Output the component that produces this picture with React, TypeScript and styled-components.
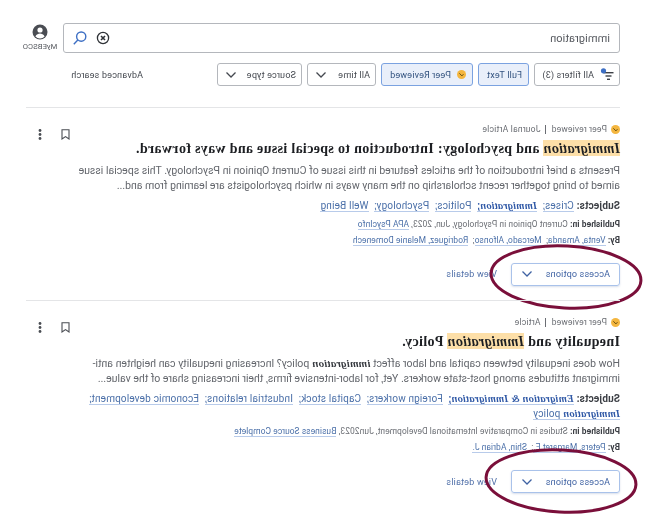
import React from "react";
import styled, { createGlobalStyle } from "styled-components";

const GlobalStyle = createGlobalStyle`
  html, body {
    margin: 0;
    padding: 0;
    background: #ffffff;
    overflow: hidden;
  }
`;

// the whole reference is a horizontal mirror of the page
const Page = styled.div`
  width: 663px;
  height: 528px;
  box-sizing: border-box;
  padding: 23px 20px 0 43px;
  transform: scaleX(-1);
  filter: blur(0.3px);
  font-family: Roboto, "Noto Sans", sans-serif;
  color: #44484f;
  overflow: hidden;
`;

const SearchRow = styled.div`
  display: flex;
  align-items: flex-start;
  gap: 5px;
`;

const SearchBox = styled.div`
  flex: none;
  width: 557px;
  height: 30px;
  box-sizing: border-box;
  border: 1px solid #b4b7bc;
  border-radius: 3px;
  padding: 0 9px;
  display: flex;
  align-items: center;
  justify-content: space-between;
  font-size: 11px;
  color: #55585e;
  letter-spacing: 0.1px;
`;

const SearchIcons = styled.div`
  display: flex;
  align-items: center;
  gap: 9px;
`;

const Account = styled.div`
  flex: none;
  display: flex;
  flex-direction: column;
  align-items: center;
  gap: 2px;
  width: 36px;
  margin-top: 1px;
  font-size: 7.6px;
  line-height: 10px;
  color: #55585e;
  letter-spacing: 0.1px;
`;

const FilterRow = styled.div`
  display: flex;
  align-items: center;
  gap: 5px;
  margin-top: 10px;
`;

const FilterButton = styled.div<{ $width: number; $active?: boolean; $align?: string }>`
  flex: none;
  width: ${({ $width }) => $width}px;
  height: 23px;
  box-sizing: border-box;
  border: 1px solid ${({ $active }) => ($active ? "#7ba2e0" : "#b4b7bc")};
  border-radius: 3px;
  background: ${({ $active }) => ($active ? "#e9effa" : "#ffffff")};
  color: ${({ $active }) => ($active ? "#32527f" : "#44484f")};
  display: flex;
  align-items: center;
  justify-content: ${({ $align }) => $align ?? "space-between"};
  gap: 6px;
  padding: 0 7px 0 5px;
  font-size: 9px;
  letter-spacing: 0.2px;
  white-space: nowrap;
`;

const AdvancedLink = styled.span`
  margin-left: 69px;
  font-size: 9px;
  letter-spacing: 0.2px;
  color: #44484f;
`;

const ResultList = styled.div`
  margin-top: 21px;
`;

const Result = styled.div<{ $height: number }>`
  position: relative;
  height: ${({ $height }) => $height}px;
  box-sizing: border-box;
  padding-top: 16px;
  border-top: 1px solid #e4e5e7;
  width: 594px;
`;

const Meta = styled.div`
  display: flex;
  align-items: center;
  gap: 4px;
  font-size: 8.5px;
  letter-spacing: 0.2px;
  color: #6a6d73;
`;

const MetaDivider = styled.span`
  width: 1px;
  height: 9px;
  background: #6a6d73;
  margin: 0 1px;
`;

const Title = styled.div`
  font-family: "Liberation Serif", serif;
  font-weight: 700;
  font-size: 14px;
  line-height: 16px;
  margin-top: 7px;
  color: #1d1f23;
  letter-spacing: 0.33px;
`;

const Highlight = styled.mark`
  background: #fddfa8;
  color: inherit;
  font-style: italic;
  padding: 1px 0 0;
`;

const Description = styled.div`
  width: 545px;
  margin-top: 6px;
  font-size: 10.5px;
  line-height: 15px;
  color: #63666c;
`;

const Subjects = styled.div`
  width: 545px;
  margin-top: 6px;
  font-size: 10px;
  line-height: 14.5px;
  letter-spacing: 0.17px;
  color: #3b3e44;
`;

const SubjectLink = styled.span<{ $strong?: boolean }>`
  color: ${({ $strong }) => ($strong ? "#2f58a6" : "#4a6fa8")};
  border-bottom: 1px solid #b8cbea;
  font-weight: ${({ $strong }) => ($strong ? 700 : 400)};
  margin-right: 3px;
`;

const Em = styled.b`
  font-family: "Liberation Serif", serif;
  font-size: 1.04em;
  font-style: italic;
  font-weight: 700;
  letter-spacing: 0.25px;
`;

const DescriptionEm = styled(Em)`
  color: #35383e;
`;

const PlainPart = styled.span`
  font-weight: 400;
  color: #4a6fa8;
`;

const Label = styled.b`
  font-weight: 700;
  color: #3b3e44;
`;

const SmallLine = styled.div`
  margin-top: 5px;
  font-size: 8.4px;
  line-height: 11px;
  letter-spacing: 0.09px;
  color: #6a6d73;
`;

const SmallLink = styled.span`
  color: #4a6fa8;
  border-bottom: 1px solid #b8cbea;
`;

const Sep = styled.span`
  margin-right: 4.5px;
`;

const ActionRow = styled.div`
  display: flex;
  align-items: center;
  gap: 14px;
  margin-top: 17px;
`;

const AccessButton = styled.div`
  width: 109px;
  height: 23px;
  box-sizing: border-box;
  border: 1px solid #a9c2ea;
  border-radius: 3px;
  box-shadow: 0 1px 2px rgba(60, 90, 150, 0.2);
  display: flex;
  align-items: center;
  justify-content: space-between;
  padding: 0 9px;
  font-size: 9px;
  letter-spacing: 0.2px;
  color: #3f62a3;
`;

const DetailsLink = styled.span`
  font-size: 9px;
  letter-spacing: 0.2px;
  color: #4f6fa8;
`;

const CardTools = styled.div`
  position: absolute;
  top: 21px;
  right: 12px;
  display: flex;
  align-items: center;
  gap: 19px;
`;

const Annotation = styled.svg<{ $top: number; $left: number }>`
  position: absolute;
  top: ${({ $top }) => $top}px;
  left: ${({ $left }) => $left}px;
  overflow: visible;
`;

const Chevron = () => (
  <svg width="12" height="8" viewBox="0 0 12 8" fill="none" stroke="currentColor" strokeWidth="1.3">
    <path d="M1.5 1.5 6 6l4.5-4.5" />
  </svg>
);

const PeerBadge = ({ size = 9 }: { size?: number }) => (
  <svg width={size} height={size} viewBox="0 0 10 10">
    <circle cx="5" cy="5" r="5" fill="#f4b63f" />
    <path d="M2.8 4.6 4.6 6.6 7.4 3.6" fill="none" stroke="#6b5314" strokeWidth="1.1" />
  </svg>
);

const FiltersIcon = () => (
  <svg width="14" height="14" viewBox="0 0 14 14">
    <rect x="0.5" y="4" width="10" height="1.4" fill="#3d4046" />
    <rect x="2.5" y="7.3" width="6" height="1.4" fill="#3d4046" />
    <rect x="4" y="10.6" width="3" height="1.4" fill="#3d4046" />
    <circle cx="10.5" cy="2.8" r="2.6" fill="#3d6fc4" />
  </svg>
);

const Bookmark = () => (
  <svg width="9" height="11" viewBox="0 0 9 11" fill="none" stroke="#4a4d53" strokeWidth="1.1">
    <path d="M1 .8h7v9.2L4.5 7.6 1 10z" />
  </svg>
);

const Dots = () => (
  <svg width="4" height="11" viewBox="0 0 4 11" fill="#4a4d53">
    <circle cx="2" cy="1.5" r="1.4" />
    <circle cx="2" cy="5.5" r="1.4" />
    <circle cx="2" cy="9.5" r="1.4" />
  </svg>
);

const Ring = ({ top, left }: { top: number; left: number }) => (
  <Annotation $top={top} $left={left} width="156" height="68">
    <ellipse
      cx="78"
      cy="34"
      rx="75"
      ry="31"
      fill="none"
      stroke="#7a0f3a"
      strokeWidth="3"
      transform="rotate(-3 78 34)"
    />
  </Annotation>
);

export default function App() {
  return (
    <>
      <GlobalStyle />
      <Page>
        <SearchRow>
          <SearchBox>
            immigration
            <SearchIcons>
              <svg width="14" height="14" viewBox="0 0 14 14" fill="none" stroke="#2f3237" strokeWidth="1.3">
                <circle cx="7" cy="7" r="5.6" />
                <path d="M5 5l4 4M9 5l-4 4" strokeWidth="1.6" />
              </svg>
              <svg width="14" height="14" viewBox="0 0 14 14" fill="none" stroke="#3d6fc4" strokeWidth="1.4">
                <circle cx="5.8" cy="5.6" r="4.6" />
                <path d="M9.2 9l4 4.2" />
              </svg>
            </SearchIcons>
          </SearchBox>
          <Account>
            <svg width="16" height="16" viewBox="0 0 16 16">
              <circle cx="8" cy="8" r="7.5" fill="#4a4d53" />
              <circle cx="8" cy="6" r="2.6" fill="#ffffff" />
              <path d="M3.4 12.4c1-2 3-2.8 4.6-2.8s3.6.8 4.6 2.8A6.4 6.4 0 0 1 8 14.4a6.4 6.4 0 0 1-4.6-2z" fill="#ffffff" />
            </svg>
            MyEBSCO
          </Account>
        </SearchRow>

        <FilterRow>
          <FilterButton $width={86} $align="flex-start">
            <FiltersIcon />
            <span>All filters (3)</span>
          </FilterButton>
          <FilterButton $width={51} $active $align="center">
            <span>Full Text</span>
          </FilterButton>
          <FilterButton $width={92} $active $align="center">
            <PeerBadge />
            Peer Reviewed
          </FilterButton>
          <FilterButton $width={69}>
            All time
            <Chevron />
          </FilterButton>
          <FilterButton $width={85}>
            Source type
            <Chevron />
          </FilterButton>
          <AdvancedLink>Advanced search</AdvancedLink>
        </FilterRow>

        <ResultList>
          <Result $height={193}>
            <Meta>
              <PeerBadge />
              Peer reviewed
              <MetaDivider />
              Journal Article
            </Meta>
            <Title>
              <Highlight>Immigration</Highlight> and psychology: Introduction to special issue and ways forward.
            </Title>
            <Description>
              Presents a brief introduction of the articles featured in this issue of Current Opinion in Psychology.
              This special issue aimed to bring together recent scholarship on the many ways in which psychologists are
              learning from and...
            </Description>
            <Subjects>
              <Label>Subjects: </Label>
              <SubjectLink>Crises;</SubjectLink>{" "}
              <SubjectLink $strong>
                <Em>Immigration</Em>;
              </SubjectLink>{" "}
              <SubjectLink>Politics;</SubjectLink>{" "}
              <SubjectLink>Psychology;</SubjectLink>{" "}
              <SubjectLink>Well Being</SubjectLink>
            </Subjects>
            <SmallLine>
              <Label>Published in: </Label>
              Current Opinion in Psychology, Jun, 2023, <SmallLink>APA PsycInfo</SmallLink>
            </SmallLine>
            <SmallLine>
              <Label>By: </Label>
              <SmallLink>Venta, Amanda</SmallLink>
              <Sep>;</Sep>
              <SmallLink>Mercado, Alfonso</SmallLink>
              <Sep>;</Sep>
              <SmallLink>Rodriguez, Melanie Domenech</SmallLink>
            </SmallLine>
            <ActionRow>
              <AccessButton>
                Access options
                <Chevron />
              </AccessButton>
              <DetailsLink>View details</DetailsLink>
            </ActionRow>
            <CardTools>
              <Bookmark />
              <Dots />
            </CardTools>
            <Ring top={135} left={-24} />
          </Result>

          <Result $height={228}>
            <Meta>
              <PeerBadge />
              Peer reviewed
              <MetaDivider />
              Article
            </Meta>
            <Title>
              Inequality and <Highlight>Immigration</Highlight> Policy.
            </Title>
            <Description>
              How does inequality between capital and labor affect <DescriptionEm>immigration</DescriptionEm> policy?
              Increasing inequality can heighten anti-immigrant attitudes among host-state workers. Yet, for
              labor-intensive firms, their increasing share of the value...
            </Description>
            <Subjects>
              <Label>Subjects: </Label>
              <SubjectLink $strong>
                <Em>Emigration &amp; Immigration</Em>;
              </SubjectLink>{" "}
              <SubjectLink>Foreign workers;</SubjectLink>{" "}
              <SubjectLink>Capital stock;</SubjectLink>{" "}
              <SubjectLink>Industrial relations;</SubjectLink>{" "}
              <SubjectLink>Economic development;</SubjectLink>{" "}
              <SubjectLink $strong>
                <Em>Immigration</Em>
                <PlainPart> policy</PlainPart>
              </SubjectLink>
            </Subjects>
            <SmallLine>
              <Label>Published in: </Label>
              Studies in Comparative International Development, Jun2023, <SmallLink>Business Source Complete</SmallLink>
            </SmallLine>
            <SmallLine>
              <Label>By: </Label>
              <SmallLink>Peters, Margaret E.</SmallLink>
              <Sep>;</Sep>
              <SmallLink>Shin, Adrian J.</SmallLink>
            </SmallLine>
            <ActionRow>
              <AccessButton>
                Access options
                <Chevron />
              </AccessButton>
              <DetailsLink>View details</DetailsLink>
            </ActionRow>
            <CardTools>
              <Bookmark />
              <Dots />
            </CardTools>
            <Ring top={146} left={-19} />
          </Result>
        </ResultList>
      </Page>
    </>
  );
}
